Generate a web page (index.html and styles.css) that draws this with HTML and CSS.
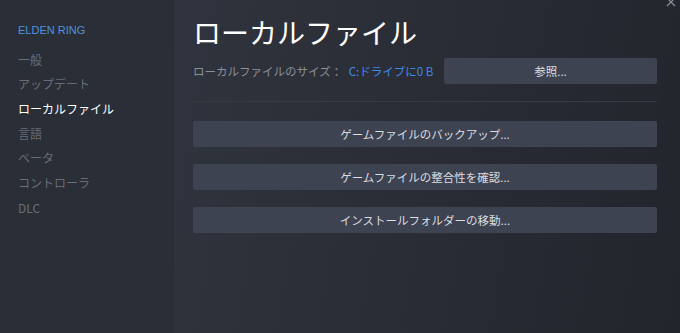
FILE: index.html
```html
<!DOCTYPE html>
<html lang="ja">
<head>
  <meta charset="UTF-8">
  <meta name="viewport" content="width=device-width, initial-scale=1.0">
  <title>ELDEN RING - プロパティ</title>
  <link rel="stylesheet" href="styles.css">
</head>
<body>
  <div class="window">
    <nav class="sidebar">
      <div class="game-title">ELDEN RING</div>
      <ul class="nav-list">
        <li>一般</li>
        <li>アップデート</li>
        <li class="active">ローカルファイル</li>
        <li>言語</li>
        <li>ベータ</li>
        <li>コントローラ</li>
        <li>DLC</li>
      </ul>
    </nav>

    <main class="content">
      <button type="button" class="close-btn" aria-label="閉じる">
        <svg width="10" height="10" viewBox="0 0 10 10">
          <path d="M1 1 L9 9 M9 1 L1 9" stroke="#8b919b" stroke-width="1.2" fill="none" />
        </svg>
      </button>

      <h1>ローカルファイル</h1>

      <div class="size-row">
        <div class="size-label">
          ローカルファイルのサイズ：
          <span class="size-value">C:ドライブに0 B</span>
        </div>
        <button type="button" class="action-btn browse-btn">参照...</button>
      </div>

      <div class="divider"></div>

      <div class="actions">
        <button type="button" class="action-btn">ゲームファイルのバックアップ...</button>
        <button type="button" class="action-btn">ゲームファイルの整合性を確認...</button>
        <button type="button" class="action-btn">インストールフォルダーの移動...</button>
      </div>
    </main>
  </div>
</body>
</html>
```

FILE: styles.css
```css
body {
  margin: 0;
  padding: 0;
  font-family: "Noto Sans CJK JP", "Noto Sans", sans-serif;
  background-color: #23262d;
  overflow: hidden;
}

.window {
  display: flex;
  width: 680px;
  height: 333px;
}

.sidebar {
  width: 174px;
  flex-shrink: 0;
  background-color: #2a2e36;
  padding: 22px 0 0 18px;
  box-sizing: border-box;
}

.game-title {
  font-family: "Liberation Sans", Arial, sans-serif;
  font-size: 11px;
  line-height: 16px;
  color: #4f94dd;
  margin-bottom: 9.6px;
}

.nav-list {
  list-style: none;
  margin: 0;
  padding: 0;
}

.nav-list li {
  font-size: 12px;
  line-height: 24.7px;
  color: #676d77;
}

.nav-list li.active {
  color: #ffffff;
}

.content {
  position: relative;
  flex: 1;
  padding: 16px 23px 0 19px;
  background: linear-gradient(100deg, #30343e 0%, #2a2d35 45%, #22252c 100%);
}

.close-btn {
  position: absolute;
  top: -5px;
  right: 3px;
  width: 12px;
  height: 12px;
  padding: 0;
  border: none;
  background: none;
}

h1 {
  margin: 0;
  font-size: 28px;
  font-weight: 400;
  line-height: 32px;
  color: #ffffff;
}

.size-row {
  display: flex;
  align-items: center;
  margin-top: 10px;
  height: 26px;
}

.size-label {
  width: 251px;
  font-size: 11.5px;
  color: #8b9099;
  white-space: nowrap;
}

.size-value {
  color: #3d8be8;
  margin-left: 4px;
}

.action-btn {
  display: block;
  height: 26px;
  padding: 0;
  border: none;
  border-radius: 2px;
  background-color: #3d4350;
  color: #dcdee2;
  font-family: "Noto Sans CJK JP", "Noto Sans", sans-serif;
  font-size: 11.5px;
  cursor: pointer;
}

.browse-btn {
  flex: 1;
}

.divider {
  margin-top: 17px;
  height: 1px;
  background-color: #363a43;
}

.actions {
  display: flex;
  flex-direction: column;
  gap: 17px;
  margin-top: 19px;
}
```
